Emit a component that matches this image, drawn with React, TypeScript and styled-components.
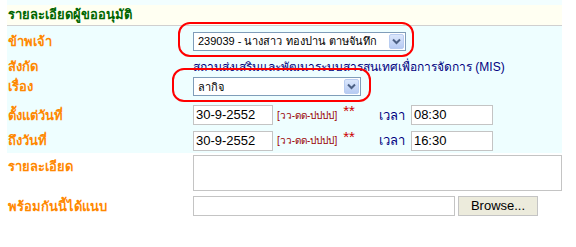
import React from 'react'
import styled, { createGlobalStyle } from 'styled-components'

const Global = createGlobalStyle`
  html, body {
    margin: 0;
    background: #ffffff;
    font-family: Tahoma, "Liberation Sans", "DejaVu Sans", sans-serif;
    font-size: 13px;
  }
`

const Page = styled.div`
  position: relative;
  width: 576px;
  height: 247px;
  overflow: hidden;
`

const Form = styled.div`
  margin-left: 7px;
  width: 555px;
  padding-top: 5px;
  background: linear-gradient(#f2feff, #f2feff) top / 100% 5px no-repeat;
`

const Header = styled.div`
  height: 20px;
  line-height: 20px;
  background: #fffff2;
  border-bottom: 1px solid #d0d0d0;
  color: #006600;
  font-weight: bold;
  padding-left: 1px;
`

const Row = styled.div<{ $h: number; $tint?: boolean; $top?: boolean }>`
  display: grid;
  grid-template-columns: 186px 1fr;
  height: ${p => p.$h}px;
  align-items: ${p => (p.$top ? 'start' : 'center')};
  background: ${p => (p.$tint ? '#eefeff' : 'transparent')};
`

const Label = styled.div<{ $pt?: number }>`
  color: #ff8800;
  font-weight: bold;
  padding-left: 1px;
  padding-top: ${p => p.$pt || 0}px;
`

const Cell = styled.div`
  display: flex;
  align-items: center;
  height: 100%;
  white-space: nowrap;
`

const SelectBox = styled.div<{ $w: number }>`
  width: ${p => p.$w}px;
  height: 19px;
  box-sizing: border-box;
  border: 1px solid #7f9db9;
  background: #fff;
  display: flex;
  align-items: center;
  padding-left: 4px;
  padding-right: 1px;
  color: #000;
  font-size: 11px;
`

const SelectText = styled.span`
  flex: 1;
  min-width: 0;
  overflow: hidden;
  white-space: nowrap;
`

const ArrowBtn = styled.div`
  flex: none;
  width: 15px;
  height: 15px;
  box-sizing: border-box;
  border: 1px solid #b9cdf1;
  border-radius: 2px;
  background: linear-gradient(#dbe7fc, #b7cbf3);
  display: flex;
  align-items: center;
  justify-content: center;
`

const Org = styled.span`
  color: #000080;
  font-size: 12px;
`

const TextBox = styled.div<{ $w: number; $h?: number }>`
  width: ${p => p.$w}px;
  height: ${p => p.$h || 20}px;
  box-sizing: border-box;
  border: 1px solid #c4c4c4;
  background: #fff;
  padding-left: 2px;
  line-height: 18px;
  color: #000;
`

const Hint = styled.span`
  color: #990000;
  font-size: 10px;
  margin-left: 4px;
`

const Stars = styled.span`
  color: #cc0000;
  font-size: 15px;
  margin-left: 6px;
  align-self: flex-start;
`

const TimeLabel = styled.span`
  color: #000080;
  margin-left: 24px;
  margin-right: 6px;
`

const BrowseBtn = styled.div`
  width: 80px;
  height: 20px;
  box-sizing: border-box;
  margin-left: 3px;
  border: 1px solid #c4c4c4;
  background: #ecebdc;
  text-align: center;
  line-height: 18px;
  color: #000;
`

const Ring = styled.div<{ $x: number; $y: number; $w: number; $h: number }>`
  position: absolute;
  left: ${p => p.$x}px;
  top: ${p => p.$y}px;
  width: ${p => p.$w}px;
  height: ${p => p.$h}px;
  box-sizing: border-box;
  border: 2px solid #ff0000;
  border-radius: 12px;
  pointer-events: none;
`

const Chevron = () => (
  <svg width="9" height="7" viewBox="0 0 9 7">
    <path d="M1 1.5 L4.5 5 L8 1.5" fill="none" stroke="#4d6185" strokeWidth="2" />
  </svg>
)

const Select = ({ w, text }: { w: number; text: string }) => (
  <SelectBox $w={w}>
    <SelectText>{text}</SelectText>
    <ArrowBtn>
      <Chevron />
    </ArrowBtn>
  </SelectBox>
)

export default function App() {
  return (
    <Page>
      <Global />
      <Form>
        <Header>รายละเอียดผู้ขออนุมัติ</Header>
        <Row $h={30} $tint>
          <Label>ข้าพเจ้า</Label>
          <Cell>
            <Select w={213} text="239039 - นางสาว ทองปาน ตาษจันทึก" />
          </Cell>
        </Row>
        <Row $h={15} $tint>
          <Label>สังกัด</Label>
          <Cell>
            <Org>สถานส่งเสริมและพัฒนาระบบสารสนเทศเพื่อการจัดการ (MIS)</Org>
          </Cell>
        </Row>
        <Row $h={31} $tint>
          <Label>เรื่อง</Label>
          <Cell>
            <Select w={168} text="ลากิจ" />
          </Cell>
        </Row>
        <Row $h={26} $tint>
          <Label>ตั้งแต่วันที่</Label>
          <Cell>
            <TextBox $w={80}>30-9-2552</TextBox>
            <Hint>[วว-ดด-ปปปป]</Hint>
            <Stars>**</Stars>
            <TimeLabel>เวลา</TimeLabel>
            <TextBox $w={82}>08:30</TextBox>
          </Cell>
        </Row>
        <Row $h={25} $tint>
          <Label>ถึงวันที่</Label>
          <Cell>
            <TextBox $w={80}>30-9-2552</TextBox>
            <Hint>[วว-ดด-ปปปป]</Hint>
            <Stars>**</Stars>
            <TimeLabel>เวลา</TimeLabel>
            <TextBox $w={82}>16:30</TextBox>
          </Cell>
        </Row>
        <Row $h={40} $top>
          <Label $pt={3}>รายละเอียด</Label>
          <Cell>
            <TextBox $w={369} $h={36} />
          </Cell>
        </Row>
        <Row $h={26}>
          <Label>พร้อมกันนี้ได้แนบ</Label>
          <Cell>
            <TextBox $w={262} />
            <BrowseBtn>Browse...</BrowseBtn>
          </Cell>
        </Row>
      </Form>
      <Ring $x={178} $y={22} $w={236} $h={35} />
      <Ring $x={172} $y={68} $w={199} $h={34} />
    </Page>
  )
}
